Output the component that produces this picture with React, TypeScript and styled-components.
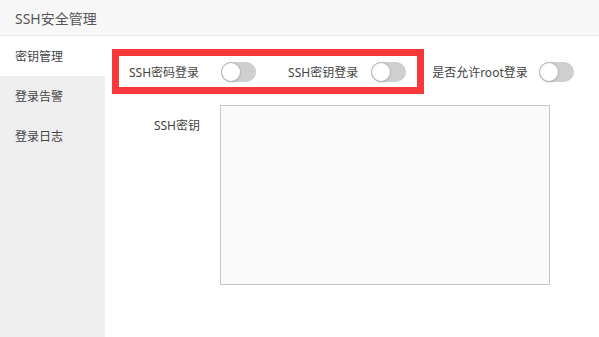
import React, { useState } from 'react';
import styled, { createGlobalStyle } from 'styled-components';

const GlobalStyle = createGlobalStyle`
  html, body {
    margin: 0;
    padding: 0;
    background: #fff;
  }
  body {
    font-family: 'Noto Sans', 'Noto Sans CJK SC', sans-serif;
    color: #444;
  }
`;

const MENU = ['密钥管理', '登录告警', '登录日志'];

const Page = styled.div`
  width: 599px;
  height: 337px;
  display: flex;
  flex-direction: column;
  overflow: hidden;
`;

const Header = styled.div`
  height: 35px;
  flex-shrink: 0;
  display: flex;
  align-items: center;
  padding-left: 15px;
  background: #f7f7f7;
  border-bottom: 1px solid #e9e9e9;
  font-size: 14px;
  color: #555;
`;

const Body = styled.div`
  flex: 1;
  display: flex;
`;

const Sidebar = styled.div`
  width: 105px;
  flex-shrink: 0;
  background: #efefef;
`;

const MenuItem = styled.div<{ $active?: boolean }>`
  height: 40px;
  display: flex;
  align-items: center;
  padding-left: 15px;
  font-size: 12px;
  color: #444;
  background: ${(p) => (p.$active ? '#fff' : 'transparent')};
  cursor: pointer;
`;

const Content = styled.div`
  flex: 1;
  padding: 13px 0 0 7px;
  display: flex;
  flex-direction: column;
  gap: 11px;
`;

const SwitchRow = styled.div`
  display: flex;
  align-items: center;
`;

const Highlight = styled.div`
  display: flex;
  align-items: center;
  height: 31px;
  padding: 0 11px 0 10px;
  border: 7px solid #f9383c;
`;

const Group = styled.div<{ $gap: number; $space?: number }>`
  display: flex;
  align-items: center;
  gap: ${(p) => p.$gap}px;
  margin-left: ${(p) => p.$space ?? 0}px;
`;

const Label = styled.span`
  font-size: 12px;
  color: #444;
  white-space: nowrap;
`;

const Track = styled.button<{ $on: boolean }>`
  position: relative;
  width: 35px;
  height: 20px;
  padding: 0;
  border: none;
  border-radius: 10px;
  background: ${(p) => (p.$on ? '#4caf50' : '#cfcfcf')};
  cursor: pointer;
  flex-shrink: 0;
`;

const Knob = styled.span<{ $on: boolean }>`
  position: absolute;
  top: 1px;
  left: ${(p) => (p.$on ? '16px' : '1px')};
  width: 18px;
  height: 18px;
  border-radius: 50%;
  background: #fff;
  box-shadow: 0 0 0 1px #b8b8b8, 0 1px 2px rgba(0, 0, 0, 0.3);
`;

const FieldRow = styled.div`
  display: flex;
  align-items: flex-start;
  gap: 20px;
`;

const FieldLabel = styled.label`
  width: 88px;
  text-align: right;
  font-size: 12px;
  color: #444;
  padding-top: 11px;
`;

const KeyArea = styled.textarea`
  width: 330px;
  height: 180px;
  box-sizing: border-box;
  border: 1px solid #c8c8c8;
  background: #fafafa;
  resize: none;
  outline: none;
  font-family: inherit;
  font-size: 12px;
`;

const Toggle: React.FC<{ on: boolean; onChange: () => void }> = ({ on, onChange }) => (
  <Track $on={on} onClick={onChange}>
    <Knob $on={on} />
  </Track>
);

const App: React.FC = () => {
  const [active, setActive] = useState(0);
  const [pwd, setPwd] = useState(false);
  const [key, setKey] = useState(false);
  const [root, setRoot] = useState(false);

  return (
    <>
      <GlobalStyle />
      <Page>
        <Header>SSH安全管理</Header>
        <Body>
          <Sidebar>
            {MENU.map((m, i) => (
              <MenuItem key={m} $active={i === active} onClick={() => setActive(i)}>
                {m}
              </MenuItem>
            ))}
          </Sidebar>
          <Content>
            <SwitchRow>
              <Highlight>
                <Group $gap={22}>
                  <Label>SSH密码登录</Label>
                  <Toggle on={pwd} onChange={() => setPwd(!pwd)} />
                </Group>
                <Group $gap={13} $space={32}>
                  <Label>SSH密钥登录</Label>
                  <Toggle on={key} onChange={() => setKey(!key)} />
                </Group>
              </Highlight>
              <Group $gap={11} $space={8}>
                <Label>是否允许root登录</Label>
                <Toggle on={root} onChange={() => setRoot(!root)} />
              </Group>
            </SwitchRow>
            <FieldRow>
              <FieldLabel>SSH密钥</FieldLabel>
              <KeyArea />
            </FieldRow>
          </Content>
        </Body>
      </Page>
    </>
  );
};

export default App;
